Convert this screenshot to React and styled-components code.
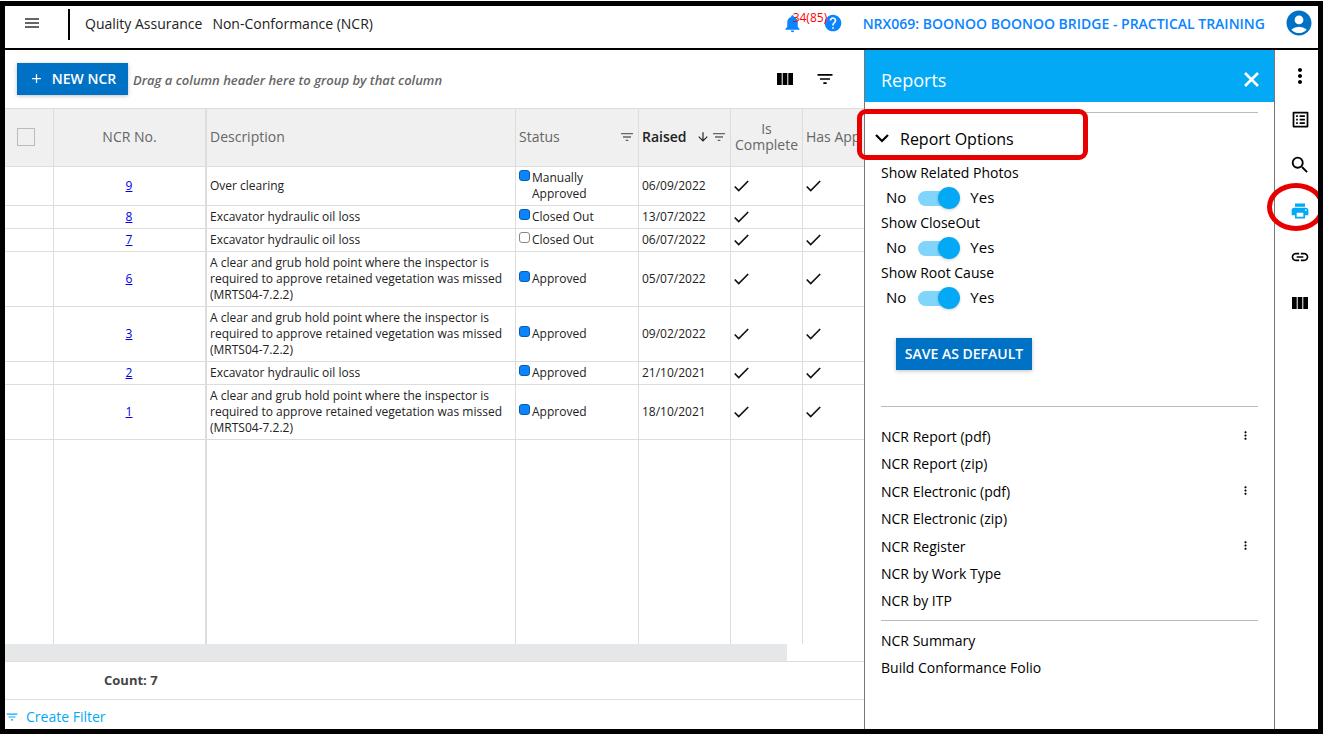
import { useState } from "react";
import styled, { createGlobalStyle } from "styled-components";
import {
  MdAccountCircle,
  MdAdd,
  MdArrowDownward,
  MdFilterList,
  MdHelp,
  MdLink,
  MdListAlt,
  MdMoreVert,
  MdNotifications,
  MdPrint,
  MdSearch,
} from "react-icons/md";

const GlobalStyle = createGlobalStyle`
  * {
    box-sizing: border-box;
  }

  body {
    margin: 0;
    background: white;
    color: #000;
    font-family: "Open Sans", "Noto Sans", sans-serif;
    font-size: 14px;
  }

  button {
    padding: 0;
    border: 0;
    background: none;
    color: inherit;
    font: inherit;
    cursor: pointer;
  }

  svg {
    display: block;
    flex: none;
  }
`;

const Page = styled.div`
  height: 100vh;
  padding-top: 1px;
`;

const Frame = styled.div`
  height: 100%;
  display: flex;
  flex-direction: column;
  overflow: hidden;
  border: 5px solid #000;
`;

const Header = styled.header`
  height: 44px;
  flex: none;
  display: flex;
  align-items: center;
  padding: 0 4px 8px 20px;
  border-bottom: 2px solid #000;
`;

const Divider = styled.span`
  width: 2px;
  height: 31px;
  margin: 2px 15px 0 29px;
  background: #000;
`;

const Crumb = styled.span`
  margin-right: 10px;
  color: #222;
  font-size: 14px;
  font-weight: 500;
`;

const HeaderRight = styled.div`
  margin-left: auto;
  display: flex;
  align-items: center;
  color: #0a84ff;
`;

const Bell = styled.button`
  position: relative;
  width: 20px;
  margin-right: 21px;
`;

const BellCount = styled.span`
  position: absolute;
  top: -3px;
  left: 11px;
  color: #f00;
  font-size: 12px;
  line-height: 16px;
`;

const Project = styled.a`
  margin: 0 19px 0 20px;
  color: #0a84ff;
  font-size: 14px;
  font-weight: 600;
  text-decoration: none;
`;

const Body = styled.div`
  flex: 1;
  min-height: 0;
  display: grid;
  grid-template-columns: minmax(0, 1fr) 411px 43px;
`;

const Main = styled.main`
  min-width: 0;
  display: flex;
  flex-direction: column;
`;

const Toolbar = styled.div`
  height: 58px;
  flex: none;
  display: flex;
  align-items: center;
  padding: 0 29px 0 12px;
  gap: 5px;
`;

const PrimaryButton = styled.button`
  height: 32px;
  width: ${(p) => p.$width}px;
  display: flex;
  align-items: center;
  justify-content: center;
  gap: 8px;
  padding-bottom: 1px;
  background: #0072c6;
  color: white;
  font-size: 14px;
  font-weight: 600;
  white-space: nowrap;
  box-shadow: 0 1px 4px #00000040;
`;

const GroupHint = styled.span`
  padding-top: 2px;
  color: #666;
  font-size: 13px;
  font-style: italic;
  font-weight: 600;
`;

const ToolbarIcons = styled.div`
  margin-left: auto;
  display: flex;
  align-items: center;
  gap: 22px;
`;

const TableArea = styled.div`
  flex: 1;
  min-height: 0;
  overflow: hidden;
  border-top: 1px solid #ddd;
`;

const Table = styled.table`
  width: 100%;
  height: 100%;
  table-layout: fixed;
  border-spacing: 0;
  color: #222;
  font-size: 12px;
  line-height: 16px;
`;

const Th = styled.th`
  height: 58px;
  padding: 0 3px 2px;
  overflow: hidden;
  background: #f0f0f0;
  border-right: ${(p) => (p.$thick ? 2 : 1)}px solid #ddd;
  border-bottom: 1px solid #ddd;
  color: ${(p) => (p.$sorted ? "#222" : "#666")};
  font-size: 14px;
  font-weight: ${(p) => (p.$sorted ? 600 : 500)};
  text-align: ${(p) => p.$align || "left"};
  white-space: ${(p) => (p.$wrap ? "normal" : "nowrap")};

  &:last-child {
    border-right: 0;
  }
`;

const ThContent = styled.div`
  display: flex;
  align-items: center;
  gap: 1px;

  span {
    margin-right: auto;
  }
`;

const SelectAll = styled.input`
  appearance: none;
  display: block;
  width: 18px;
  height: 18px;
  margin: 0 0 0 9px;
  border: 1px solid #bbb;
`;

const Td = styled.td`
  padding: 3px 4px 3px 3px;
  border-right: ${(p) => (p.$thick ? 2 : 1)}px solid #ddd;
  border-bottom: 1px solid #ddd;
  text-align: ${(p) => p.$align || "left"};

  &:last-child {
    border-right: 0;
  }
`;

const FillerRow = styled.tr`
  height: 100%;

  td {
    border-bottom: 0;
  }
`;

const NcrLink = styled.a`
  color: #00e;
`;

const Status = styled.div`
  display: flex;
  gap: 2px;
`;

const StatusBox = styled.span`
  width: 11px;
  height: 11px;
  flex: none;
  border: 1px solid ${(p) => (p.$on ? "#0a5cab" : "#888")};
  border-radius: 3px;
  background: ${(p) => (p.$on ? "#0a84ff" : "white")};
`;

const ScrollTrack = styled.div`
  height: 17px;
  flex: none;
  padding-right: 77px;
`;

const ScrollThumb = styled.div`
  height: 100%;
  background: #e6e7e9;
`;

const Summary = styled.div`
  height: 39px;
  flex: none;
  padding-left: 99px;
  border-top: 1px solid #ddd;
  border-bottom: 1px solid #ddd;
  color: #444;
  font-size: 13px;
  font-weight: 700;
  line-height: 37px;
`;

const CreateFilter = styled.button`
  height: 29px;
  flex: none;
  display: flex;
  align-items: center;
  gap: 7px;
  padding: 4px 0 0;
  color: #03a9f4;
`;

const Panel = styled.aside`
  border: solid #777;
  border-width: 0 1px;
`;

const PanelHead = styled.div`
  height: 52px;
  display: flex;
  align-items: center;
  justify-content: space-between;
  padding: 7px 15px 0 16px;
  background: #03a9f4;
  color: white;

  h2 {
    margin: 0;
    font-size: 18px;
    font-weight: 400;
  }
`;

const PanelBody = styled.div`
  padding: 10px 16px;
`;

const Rule = styled.hr`
  margin: 0;
  border: 0;
  border-top: 1px solid #bbb;
`;

const OptionsToggle = styled.button`
  position: relative;
  height: 49px;
  display: flex;
  align-items: center;
  gap: 11px;
  padding-top: 2px;
  margin-left: -6px;
  font-size: 16px;
`;

const BoxMark = styled.span`
  position: absolute;
  top: -4px;
  left: -18px;
  width: 231px;
  height: 51px;
  border: 5px solid #e80000;
  border-radius: 9px;
`;

const Option = styled.fieldset`
  margin: 0;
  padding: 0;
  border: 0;

  legend {
    padding: 0;
    line-height: 22px;
  }
`;

const SwitchRow = styled.label`
  height: 28px;
  display: flex;
  align-items: center;
  gap: 10px;
  padding: 0 0 2px 5px;
  font-size: 15px;
`;

const Switch = styled.input`
  appearance: none;
  position: relative;
  width: 42px;
  height: 22px;
  margin: 2px 0 0 2px;

  &::before {
    content: "";
    position: absolute;
    inset: 4px 2px 3px 0;
    border-radius: 8px;
    background: ${(p) => (p.checked ? "#81d4fa" : "#bbb")};
  }

  &::after {
    content: "";
    position: absolute;
    top: 0;
    left: ${(p) => (p.checked ? 20 : 0)}px;
    width: 22px;
    height: 22px;
    border-radius: 50%;
    background: ${(p) => (p.checked ? "#03a9f4" : "#fff")};
    box-shadow: 0 1px 3px #00000033;
  }
`;

const SaveArea = styled.div`
  padding: 26px 15px 36px;
`;

const ReportList = styled.ul`
  margin: 0;
  padding: ${(p) => p.$pad || "0"};
  list-style: none;
`;

const ReportItem = styled.li`
  height: ${(p) => (p.$menu ? 28 : 27)}px;
  display: flex;
  align-items: center;
  justify-content: space-between;
  padding-right: 6px;

  a {
    color: #000;
    text-decoration: none;
  }

  button {
    padding-bottom: 2px;
  }
`;

const Rail = styled.nav`
  display: flex;
  flex-direction: column;
  align-items: center;
  gap: 24px;
  padding: 18px 0 0 7px;
`;

const RailButton = styled.button`
  position: relative;
  height: 22px;
  display: flex;
  align-items: center;
  color: ${(p) => (p.$active ? "#03a9f4" : "#000")};

  &:first-child {
    height: 16px;
  }
`;

const CircleMark = styled.span`
  position: absolute;
  top: -17px;
  left: -23px;
  width: 58px;
  height: 48px;
  border: 5px solid #e80000;
  border-radius: 50%;
`;

const ColumnsIcon = () => (
  <svg width="16" height="12" viewBox="0 0 16 12">
    <path d="M0 0h4.700v12H0zM5.700 0h4.600v12H5.700zM11.300 0H16v12h-4.700z" />
  </svg>
);

const MenuIcon = () => (
  <svg width="14" height="10" viewBox="0 0 14 10" stroke="#333" strokeWidth="1.3">
    <path d="M0 1h14M0 5h14M0 9h14" />
  </svg>
);

const Check = () => (
  <svg width="15" height="12" viewBox="0 0 15 12" fill="none" stroke="#111" strokeWidth="1.7">
    <path d="M.7 6.500l4 4L14.200 1" />
  </svg>
);

const Chevron = () => (
  <svg width="14" height="9" viewBox="0 0 14 9" fill="none" stroke="#000" strokeWidth="2.2">
    <path d="M1 1l6 6 6-6" />
  </svg>
);

const CloseIcon = () => (
  <svg width="15" height="15" viewBox="0 0 15 15" stroke="currentColor" strokeWidth="2.7">
    <path d="M1 1l13 13M14 1L1 14" />
  </svg>
);

const VEGETATION =
  "A clear and grub hold point where the inspector is required to approve retained vegetation was missed (MRTS04-7.2.2)";
const OIL = "Excavator hydraulic oil loss";

const rows = [
  { no: 9, text: "Over clearing", status: "Manually Approved", on: true, raised: "06/09/2022", app: true },
  { no: 8, text: OIL, status: "Closed Out", on: true, raised: "13/07/2022", app: false },
  { no: 7, text: OIL, status: "Closed Out", on: false, raised: "06/07/2022", app: true },
  { no: 6, text: VEGETATION, status: "Approved", on: true, raised: "05/07/2022", app: true },
  { no: 3, text: VEGETATION, status: "Approved", on: true, raised: "09/02/2022", app: true },
  { no: 2, text: OIL, status: "Approved", on: true, raised: "21/10/2021", app: true },
  { no: 1, text: VEGETATION, status: "Approved", on: true, raised: "18/10/2021", app: true },
];

const reports = [
  { name: "NCR Report (pdf)", menu: true },
  { name: "NCR Report (zip)" },
  { name: "NCR Electronic (pdf)", menu: true },
  { name: "NCR Electronic (zip)" },
  { name: "NCR Register", menu: true },
  { name: "NCR by Work Type" },
  { name: "NCR by ITP" },
];

const otherReports = [{ name: "NCR Summary" }, { name: "Build Conformance Folio" }];

const NcrTable = () => (
  <Table>
    <colgroup>
      <col width="49" />
      <col width="153" />
      <col width="309" />
      <col width="123" />
      <col width="92" />
      <col width="72" />
      <col />
    </colgroup>
    <thead>
      <tr>
        <Th>
          <SelectAll type="checkbox" aria-label="Select all" />
        </Th>
        <Th $align="center" $thick>
          NCR No.
        </Th>
        <Th>Description</Th>
        <Th>
          <ThContent>
            <span>Status</span>
            <MdFilterList size={16} />
          </ThContent>
        </Th>
        <Th $sorted>
          <ThContent>
            <span>Raised</span>
            <MdArrowDownward size={14} />
            <MdFilterList size={16} color="#666" />
          </ThContent>
        </Th>
        <Th $align="center" $wrap>
          Is Complete
        </Th>
        <Th>Has App</Th>
      </tr>
    </thead>
    <tbody>
      {rows.map((r) => (
        <tr key={r.no}>
          <Td />
          <Td $align="center" $thick>
            <NcrLink href="#">{r.no}</NcrLink>
          </Td>
          <Td>{r.text}</Td>
          <Td>
            <Status>
              <StatusBox $on={r.on} />
              <span>{r.status}</span>
            </Status>
          </Td>
          <Td>{r.raised}</Td>
          <Td>
            <Check />
          </Td>
          <Td>{r.app && <Check />}</Td>
        </tr>
      ))}
      <FillerRow>
        <Td />
        <Td $thick />
        <Td />
        <Td />
        <Td />
        <Td />
        <Td />
      </FillerRow>
    </tbody>
  </Table>
);

const YesNoOption = ({ label }) => {
  const [on, setOn] = useState(true);

  return (
    <Option>
      <legend>{label}</legend>
      <SwitchRow>
        No
        <Switch
          type="checkbox"
          role="switch"
          aria-label={label}
          checked={on}
          onChange={() => setOn(!on)}
        />
        Yes
      </SwitchRow>
    </Option>
  );
};

const Reports = ({ items, pad }) => (
  <ReportList $pad={pad}>
    {items.map((r) => (
      <ReportItem key={r.name} $menu={r.menu}>
        <a href="#">{r.name}</a>
        {r.menu && (
          <button aria-label={`${r.name} menu`}>
            <MdMoreVert size={13} />
          </button>
        )}
      </ReportItem>
    ))}
  </ReportList>
);

export default function App() {
  const [open, setOpen] = useState(true);

  return (
    <Page>
      <GlobalStyle />
      <Frame>
        <Header>
          <button aria-label="Menu">
            <MenuIcon />
          </button>
          <Divider />
          <Crumb>Quality Assurance</Crumb>
          <Crumb>Non-Conformance (NCR)</Crumb>
          <HeaderRight>
            <Bell aria-label="Notifications">
              <MdNotifications size={21} />
              <BellCount>34(85)</BellCount>
            </Bell>
            <button aria-label="Help">
              <MdHelp size={20} />
            </button>
            <Project href="#">NRX069: BOONOO BOONOO BRIDGE - PRACTICAL TRAINING</Project>
            <button aria-label="Account">
              <MdAccountCircle size={30} color="#0072c6" />
            </button>
          </HeaderRight>
        </Header>

        <Body>
          <Main>
            <Toolbar>
              <PrimaryButton $width={111}>
                <MdAdd size={15} />
                NEW NCR
              </PrimaryButton>
              <GroupHint>Drag a column header here to group by that column</GroupHint>
              <ToolbarIcons>
                <button aria-label="Choose columns">
                  <ColumnsIcon />
                </button>
                <button aria-label="Filter">
                  <MdFilterList size={20} />
                </button>
              </ToolbarIcons>
            </Toolbar>
            <TableArea>
              <NcrTable />
            </TableArea>
            <ScrollTrack>
              <ScrollThumb />
            </ScrollTrack>
            <Summary>Count: 7</Summary>
            <CreateFilter>
              <MdFilterList size={14} />
              Create Filter
            </CreateFilter>
          </Main>

          <Panel>
            <PanelHead>
              <h2>Reports</h2>
              <button aria-label="Close">
                <CloseIcon />
              </button>
            </PanelHead>
            <PanelBody>
              <Rule />
              <OptionsToggle aria-expanded={open} onClick={() => setOpen(!open)}>
                <Chevron />
                Report Options
                <BoxMark />
              </OptionsToggle>
              {open && (
                <>
                  <YesNoOption label="Show Related Photos" />
                  <YesNoOption label="Show CloseOut" />
                  <YesNoOption label="Show Root Cause" />
                </>
              )}
              <SaveArea>
                <PrimaryButton $width={136}>SAVE AS DEFAULT</PrimaryButton>
              </SaveArea>
              <Rule />
              <Reports items={reports} pad="15px 0 6px" />
              <Rule />
              <Reports items={otherReports} pad="6px 0" />
            </PanelBody>
          </Panel>

          <Rail>
            <RailButton aria-label="More">
              <MdMoreVert size={24} />
            </RailButton>
            <RailButton aria-label="Details">
              <MdListAlt size={21} />
            </RailButton>
            <RailButton aria-label="Search">
              <MdSearch size={22} />
            </RailButton>
            <RailButton aria-label="Print" $active>
              <MdPrint size={20} />
              <CircleMark />
            </RailButton>
            <RailButton aria-label="Link">
              <MdLink size={20} />
            </RailButton>
            <RailButton aria-label="Columns">
              <ColumnsIcon />
            </RailButton>
          </Rail>
        </Body>
      </Frame>
    </Page>
  );
}
